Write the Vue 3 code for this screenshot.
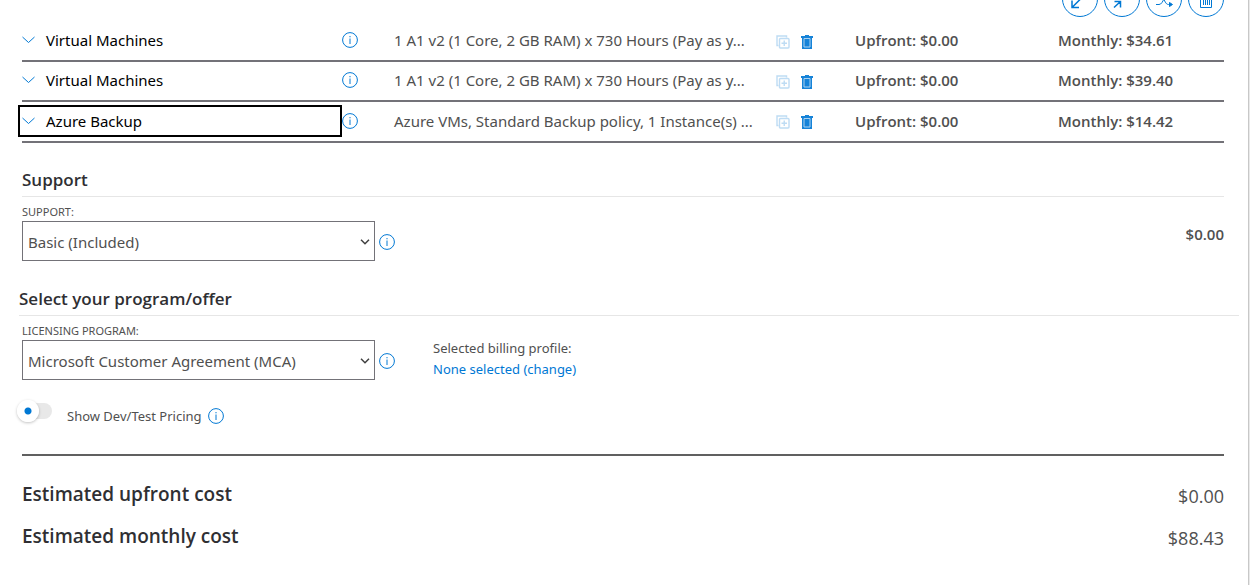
<script setup>
import { ref } from 'vue'

const rows = [
  { name: 'Virtual Machines', description: '1 A1 v2 (1 Core, 2 GB RAM) x 730 Hours (Pay as y...', upfront: '$0.00', monthly: '$34.61' },
  { name: 'Virtual Machines', description: '1 A1 v2 (1 Core, 2 GB RAM) x 730 Hours (Pay as y...', upfront: '$0.00', monthly: '$39.40' },
  { name: 'Azure Backup', description: 'Azure VMs, Standard Backup policy, 1 Instance(s) ...', upfront: '$0.00', monthly: '$14.42', focused: true }
]

const support = ref('Basic (Included)')
const program = ref('Microsoft Customer Agreement (MCA)')
const devTest = ref(false)
</script>

<template>
  <main class="estimate">
    <div class="toolbar">
      <button type="button" class="round" aria-label="Expand all">
        <svg viewBox="0 0 34 34"><path d="M22 12.500 9 25.500M9 18.500v7h7" /></svg>
      </button>
      <button type="button" class="round" aria-label="Collapse all">
        <svg viewBox="0 0 34 34"><path d="M9 25.500l6.500-6M9.500 19.500h6v6M25 10l-6 6" /></svg>
      </button>
      <button type="button" class="round" aria-label="Reorder">
        <svg class="thin" viewBox="0 0 34 34"><path d="M9 22.500h3c2.500 0 3.500-3 5-5.500M15.500 15.500c2.500 3 3 7 6 7h3" /><path class="solid" d="M22.500 20.500l3 2-3 2z" /></svg>
      </button>
      <button type="button" class="round" aria-label="Delete all">
        <svg class="thin" viewBox="0 0 34 34"><path d="M10 13.500h14M11.500 13.500v12h11v-12M14.500 15v8M16.500 15v8M18.500 15v8M20.500 15v8" /></svg>
      </button>
    </div>

    <ul class="rows">
      <li v-for="(row, i) in rows" :key="i" class="row" :class="{ focused: row.focused }">
        <button type="button" class="toggle-row">
          <svg class="chevron" viewBox="0 0 13 8"><path d="M.5 1l6 5.500 6-5.500" /></svg>
          <span>{{ row.name }}</span>
        </button>
        <button type="button" class="info" :aria-label="`About ${row.name}`">
          <svg viewBox="0 0 16 16"><circle cx="8" cy="8" r="7.400" /><path d="M8 6.500v5.500M8 4v1.300" /></svg>
        </button>
        <span class="description">{{ row.description }}</span>
        <span class="actions">
          <button type="button" class="icon" aria-label="Clone" disabled>
            <svg class="clone" viewBox="0 0 14 14"><path d="M2.500 10.500h-1.500v-9.500h9.500v1.500" /><rect x="3.500" y="3.500" width="9.500" height="9.500" rx="1" /><path d="M8.250 5.500v5.500M5.500 8.250h5.500" /></svg>
          </button>
          <button type="button" class="icon" aria-label="Delete">
            <svg class="trash" viewBox="0 0 12 14"><path class="body" d="M4 0h4v1h4v2h-1v11h-10v-11h-1v-2h4z" /><path class="lines" d="M3 3.500v8.500h6v-8.500z" /></svg>
          </button>
        </span>
        <span class="price">Upfront: {{ row.upfront }}</span>
        <span class="price">Monthly: {{ row.monthly }}</span>
      </li>
    </ul>

    <section class="support">
      <h2>Support</h2>
      <div class="fields">
        <div class="field">
          <label for="support">SUPPORT:</label>
          <div class="control">
            <div class="select">
              <select id="support" v-model="support"><option>Basic (Included)</option></select>
              <svg class="arrow" viewBox="0 0 10 6"><path d="M1 .8l4 4 4-4" /></svg>
            </div>
            <button type="button" class="info" aria-label="About support">
              <svg viewBox="0 0 16 16"><circle cx="8" cy="8" r="7.400" /><path d="M8 6.500v5.500M8 4v1.300" /></svg>
            </button>
          </div>
        </div>
        <span class="support-price price">$0.00</span>
      </div>
    </section>

    <section class="program">
      <h2>Select your program/offer</h2>
      <div class="fields">
        <div class="field">
          <label for="program">LICENSING PROGRAM:</label>
          <div class="control">
            <div class="select">
              <select id="program" v-model="program"><option>Microsoft Customer Agreement (MCA)</option></select>
              <svg class="arrow" viewBox="0 0 10 6"><path d="M1 .8l4 4 4-4" /></svg>
            </div>
            <button type="button" class="info" aria-label="About licensing programs">
              <svg viewBox="0 0 16 16"><circle cx="8" cy="8" r="7.400" /><path d="M8 6.500v5.500M8 4v1.300" /></svg>
            </button>
          </div>
        </div>
        <div class="billing">
          <div>Selected billing profile:</div>
          <a href="#">None selected (change)</a>
        </div>
      </div>
    </section>

    <div class="dev-test">
      <input id="devtest" v-model="devTest" type="checkbox" role="switch" class="switch" />
      <label for="devtest">Show Dev/Test Pricing</label>
      <button type="button" class="info" aria-label="About Dev/Test pricing">
        <svg viewBox="0 0 16 16"><circle cx="8" cy="8" r="7.400" /><path d="M8 6.500v5.500M8 4v1.300" /></svg>
      </button>
    </div>

    <dl class="totals">
      <div><dt>Estimated upfront cost</dt><dd>$0.00</dd></div>
      <div><dt>Estimated monthly cost</dt><dd>$88.43</dd></div>
    </dl>
  </main>
</template>

<style>
html,
body {
  background: #fff;
}
body {
  overflow: hidden;
}
</style>

<style scoped>
.estimate {
  box-sizing: border-box;
  min-height: 100vh;
  margin-right: 1px;
  padding: 0 24px 0 22px;
  border-right: 1px solid #c8c8c8;
  box-shadow: 1px 0 #e9e9e9;
  overflow: hidden;
  color: #505050;
  font-family: "Noto Sans", "Open Sans", sans-serif;
  font-size: 15px;
  line-height: 20px;
}
button {
  padding: 0;
  border: 0;
  background: none;
  color: inherit;
  font: inherit;
}
svg {
  display: block;
  fill: none;
  stroke: #0078d4;
}
.toolbar {
  display: flex;
  justify-content: flex-end;
  gap: 6px;
  margin-top: -19px;
}
.round {
  box-sizing: border-box;
  width: 36px;
  height: 36px;
  border: 1px solid #0078d4;
  border-radius: 50%;
}
.round svg {
  width: 34px;
  height: 34px;
  stroke-width: 1.5;
}
.round .thin {
  stroke-width: 1;
}
.round .solid {
  fill: #0078d4;
}
.rows {
  margin: 5px 0 0;
  padding: 0;
  list-style: none;
}
.row {
  display: grid;
  box-sizing: border-box;
  grid-template-columns: 320fr 52fr 382fr 79fr 203fr 166fr;
  align-items: center;
  height: 40px;
  padding-bottom: 2px;
  border-bottom: 2px solid #737278;
}
.row.focused {
  height: 41px;
}
.toggle-row {
  display: flex;
  align-items: center;
  gap: 11px;
  height: 28px;
  margin: 0 2px 0 -2px;
  padding-left: 2px;
  color: #000;
  text-align: left;
}
.focused .toggle-row {
  outline: 2px solid #000;
}
.chevron {
  width: 13px;
  height: 8px;
}
.info {
  flex: none;
  width: 16px;
  height: 16px;
}
.info svg {
  width: 16px;
  height: 16px;
}
.description {
  white-space: nowrap;
}
.actions {
  display: flex;
  gap: 11px;
  padding-top: 3px;
}
.clone {
  width: 14px;
  height: 14px;
  stroke-width: 1.4;
  opacity: 0.25;
}
.trash {
  width: 12px;
  height: 14px;
}
.trash .body {
  fill: #1683d8;
  stroke: none;
}
.trash .lines {
  stroke: #a9d1f1;
}
.price,
h2,
.totals {
  font-family: "Open Sans", "Noto Sans", sans-serif;
}
.price {
  font-weight: 600;
}
h2 {
  margin: 0;
  padding-bottom: 4px;
  border-bottom: 1px solid #e6e6e6;
  color: #2f2f33;
  font-size: 17px;
  font-weight: 600;
  line-height: 24px;
}
.support {
  margin-top: 25px;
}
.program {
  margin: 26px -15px 0 -3px;
}
.program .fields {
  padding-left: 3px;
}
.fields {
  display: flex;
  align-items: flex-start;
}
.field {
  width: 373px;
  padding-top: 7px;
}
.field label {
  display: block;
  padding-bottom: 1px;
  font-size: 11px;
  line-height: 16px;
}
.control {
  display: flex;
  align-items: center;
  gap: 4px;
}
.control .info {
  margin-top: 2px;
}
.select {
  position: relative;
  flex: 1;
}
select {
  display: block;
  box-sizing: border-box;
  width: 100%;
  height: 40px;
  padding: 2px 20px 0 5px;
  border: 1px solid #737278;
  border-radius: 0;
  background-color: #fff;
  color: #505050;
  font: inherit;
  appearance: none;
}
.arrow {
  position: absolute;
  top: 18px;
  right: 5px;
  width: 10px;
  height: 6px;
  stroke: #404040;
  stroke-width: 1.5;
  pointer-events: none;
}
.support-price {
  margin: 27px 0 0 auto;
}
.billing {
  margin: 22px 0 0 38px;
  font-size: 13px;
  line-height: 21px;
}
a {
  color: #0078d4;
  text-decoration: none;
}
.dev-test {
  display: flex;
  align-items: center;
  margin-top: 21px;
  font-size: 13px;
  line-height: 30px;
}
.dev-test label {
  margin: 0 6px 0 15px;
}
.switch {
  position: relative;
  width: 30px;
  height: 16px;
  margin: 0 0 10px;
  border-radius: 8px;
  background: #e8e8e8;
  appearance: none;
}
.switch::before {
  position: absolute;
  top: -3px;
  left: -5px;
  width: 22px;
  height: 22px;
  border-radius: 50%;
  background: radial-gradient(circle, #0078d4 3px, #fff 4px);
  box-shadow: 0 1px 3px rgb(0 0 0 / 25%);
  content: "";
}
.switch:checked::before {
  left: 13px;
}
.totals {
  margin: 23px 0 0;
  padding-top: 18px;
  border-top: 2px solid #606060;
}
.totals div {
  display: flex;
  justify-content: space-between;
  height: 42px;
  line-height: 40px;
}
.totals dt {
  color: #2f2f33;
  font-size: 19px;
  font-weight: 600;
}
.totals dd {
  margin: 2px 0 0;
  font-size: 18px;
}
</style>
